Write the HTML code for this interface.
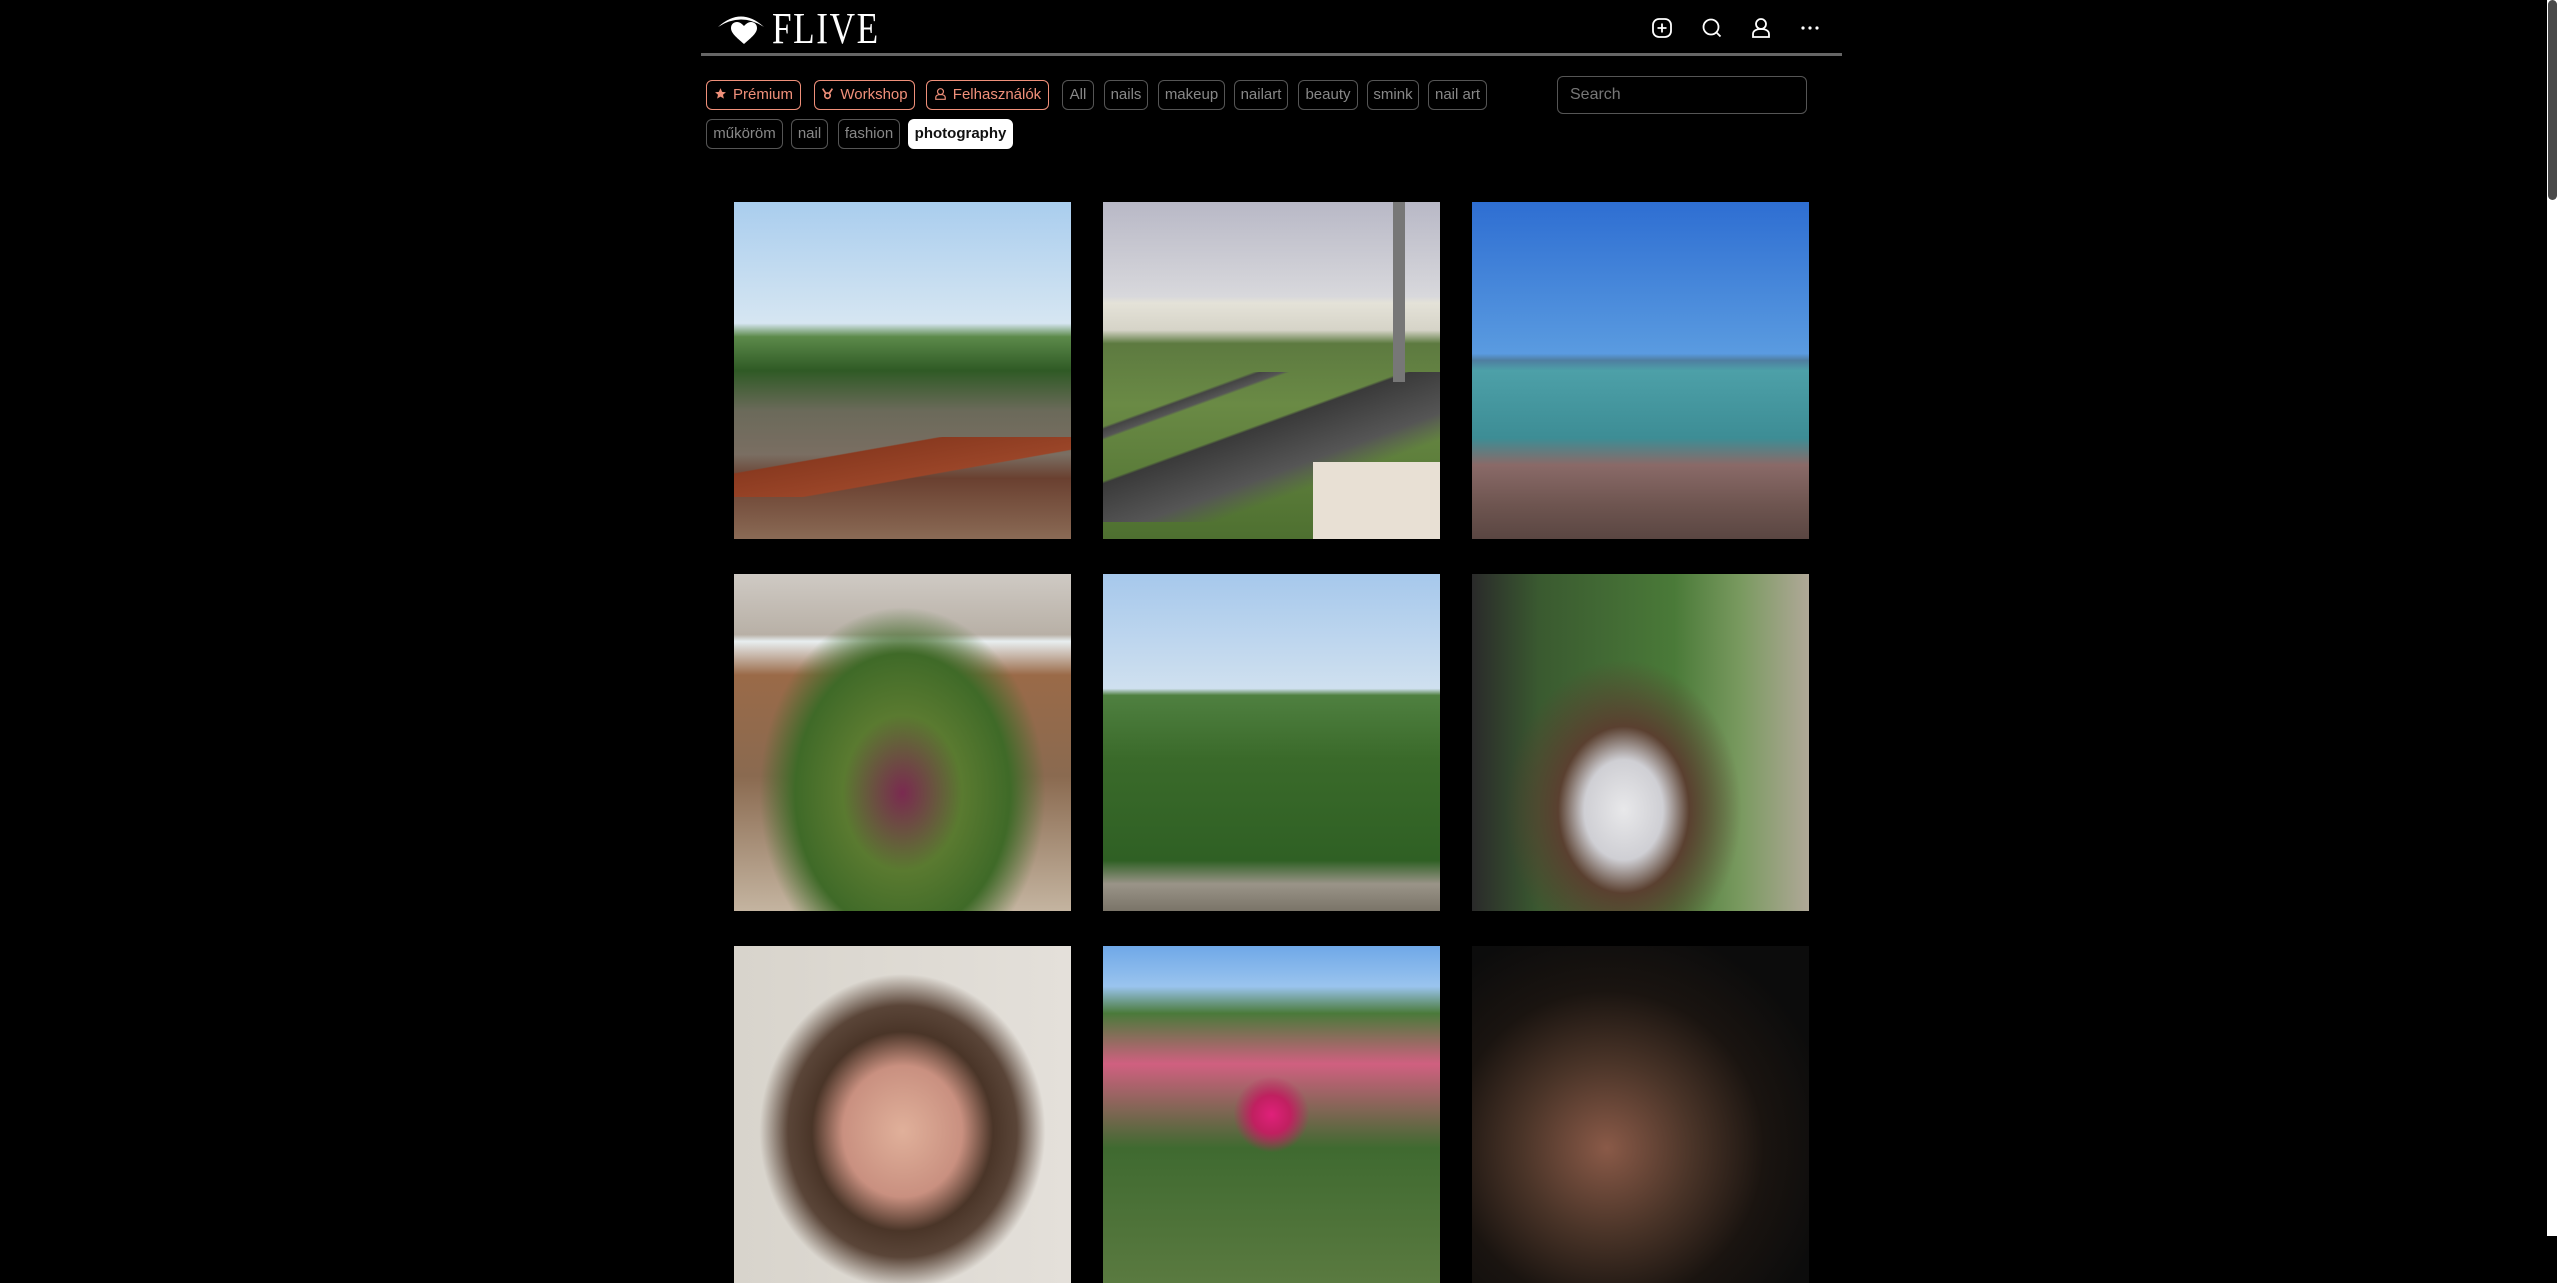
<!DOCTYPE html>
<html><head><meta charset="utf-8"><style>
html,body{margin:0;padding:0;background:#000;width:2557px;height:1236px;overflow:hidden;font-family:"Liberation Sans",sans-serif}
.abs{position:absolute}
.line{left:701px;top:53px;width:1141px;height:3px;background:#666}
.tag{position:absolute;height:28px;border:1px solid #555;border-radius:6px;color:#888;font-size:15px;line-height:28px;text-align:center;box-sizing:content-box}
.o{border-color:#f0907a;color:#f0907a}
.sel{background:#fff;color:#111;font-weight:bold;border-color:#fff}
.ph{position:absolute;width:337px;height:337px;overflow:hidden}
.scroll{left:2547px;top:0;width:10px;height:1236px;background:#fff}
.thumb{left:2548px;top:0;width:9px;height:200px;background:#4a4a4a;border-radius:5px}
</style></head><body>
<svg class="abs" style="left:716px;top:10px" width="52" height="36" viewBox="0 0 52 36">
<path d="M2 17 Q25 -4 48 17 Q25 2 2 17Z" fill="#fff"/>
<path d="M28 34 C20 27 15 23 15 18 C15 14 18 12 21 12 C24 12 26 14 28 16 C30 14 32 12 35 12 C38 12 41 14 41 18 C41 23 36 27 28 34Z" fill="#fff"/>
</svg>
<div class="abs" style="left:772px;top:3px;font-family:'Liberation Serif',serif;font-size:44px;color:#fff;transform:scaleX(0.8);transform-origin:left;letter-spacing:2px;font-weight:normal">FLIVE</div>
<svg class="abs" style="left:1651px;top:17px" width="22" height="22" viewBox="0 0 22 22" fill="none" stroke="#fff" stroke-width="1.8"><rect x="2" y="2" width="18" height="18" rx="6"/><path d="M11 6.5v9M6.5 11h9"/></svg>
<svg class="abs" style="left:1701px;top:17px" width="22" height="22" viewBox="0 0 22 22" fill="none" stroke="#fff" stroke-width="1.8"><circle cx="10" cy="10" r="7.5"/><path d="M15.5 15.5l4 4"/></svg>
<svg class="abs" style="left:1750px;top:17px" width="22" height="22" viewBox="0 0 22 22" fill="none" stroke="#fff" stroke-width="1.8"><circle cx="11" cy="7" r="5"/><path d="M3 20v-3c0-3 3-5 8-5s8 2 8 5v3z"/></svg>
<svg class="abs" style="left:1800px;top:24px" width="20" height="8" viewBox="0 0 20 8" fill="#fff"><circle cx="3" cy="4" r="1.6"/><circle cx="10" cy="4" r="1.6"/><circle cx="17" cy="4" r="1.6"/></svg>
<div class="abs line"></div>
<div class="tag o" style="left:706px;top:80px;width:93px"><svg width="13" height="13" viewBox="0 0 24 24" style="vertical-align:-1px;margin-right:6px"><path d="M12 2l3 7 7 .6-5.4 4.7 1.7 7.2L12 17.8 5.7 21.5l1.7-7.2L2 9.6 9 9z" fill="#f0907a"/></svg>Prémium</div>
<div class="tag o" style="left:814px;top:80px;width:99px"><svg width="13" height="13" viewBox="0 0 24 24" style="vertical-align:-1px;margin-right:6px" fill="none" stroke="#f0907a" stroke-width="3"><path d="M3 3l6 9M21 3l-6 9"/><circle cx="12" cy="16" r="5"/></svg>Workshop</div>
<div class="tag o" style="left:926px;top:80px;width:121px"><svg width="13" height="14" viewBox="0 0 22 22" style="vertical-align:-2px;margin-right:6px" fill="none" stroke="#f0907a" stroke-width="2"><circle cx="11" cy="7" r="5"/><path d="M3 20v-3c0-3 3-5 8-5s8 2 8 5v3z"/></svg>Felhasználók</div>
<div class="tag" style="left:1062px;top:80px;width:30px">All</div>
<div class="tag" style="left:1104px;top:80px;width:42px">nails</div>
<div class="tag" style="left:1158px;top:80px;width:65px">makeup</div>
<div class="tag" style="left:1234px;top:80px;width:52px">nailart</div>
<div class="tag" style="left:1298px;top:80px;width:58px">beauty</div>
<div class="tag" style="left:1367px;top:80px;width:50px">smink</div>
<div class="tag" style="left:1428px;top:80px;width:57px">nail art</div>
<div class="tag" style="left:706px;top:119px;width:75px">műköröm</div>
<div class="tag" style="left:791px;top:119px;width:35px">nail</div>
<div class="tag" style="left:838px;top:119px;width:60px">fashion</div>
<div class="tag sel" style="left:908px;top:119px;width:103px">photography</div>
<div class="abs" style="left:1557px;top:76px;border:1px solid #555;border-radius:6px;color:#777;font-size:16px;line-height:36px;padding-left:12px;box-sizing:border-box;width:250px;height:38px">Search</div>
<div class="ph" style="left:734px;top:202px;background:linear-gradient(#a9cdee 0%,#d6e6f2 36%,#5c8a4a 40%,#2f5a25 50%,#6b6a5a 62%,#7a6e62 75%,#6a4030 82%,#8a6a55 100%)"><div class="abs" style="left:0;top:235px;width:337px;height:60px;background:linear-gradient(170deg,transparent 30%,#8a3a20 31%,#9a4528 60%,transparent 61%)"></div></div>
<div class="ph" style="left:1103px;top:202px;background:linear-gradient(#b8b8c6 0%,#d8d8dc 28%,#e4e2d8 30%,#d6d4c8 38%,#5d7a40 42%,#6a8a45 60%,#4e7030 100%)"><div class="abs" style="left:0;top:170px;width:337px;height:150px;background:linear-gradient(160deg,transparent 20%,#444 21%,#555 24%,transparent 25%,transparent 40%,#3a3a3a 41%,#555 60%,transparent 70%)"></div><div class="abs" style="left:210px;top:260px;width:127px;height:77px;background:#e8e0d4"></div><div class="abs" style="left:290px;top:0;width:12px;height:180px;background:#777"></div></div>
<div class="ph" style="left:1472px;top:202px;background:linear-gradient(#2e6ed2 0%,#5a9be0 45%,#4f7ea0 47%,#4da0a8 50%,#3d8d95 70%,#8a6a68 78%,#6e5550 90%,#5a4642 100%)"></div>
<div class="ph" style="left:734px;top:574px;background:radial-gradient(ellipse at 50% 65%,#7a2a50 0%,#5a7a30 25%,#3f6a28 45%,transparent 60%),linear-gradient(#cfcac4 0%,#b8b0a6 18%,#e8eef0 20%,#9a6a48 30%,#8a6a50 60%,#c4b4a0 100%)"></div>
<div class="ph" style="left:1103px;top:574px;background:linear-gradient(#a6c8ec 0%,#cfe0ef 34%,#4f8040 36%,#3a6a2a 55%,#2f6024 85%,#9a9488 92%,#7a7468 100%)"></div>
<div class="ph" style="left:1472px;top:574px;background:radial-gradient(ellipse at 45% 70%,#e8e8ea 0%,#cfcfd4 15%,#5a4030 25%,transparent 45%),linear-gradient(90deg,#2a2a2a 0%,#3a5a30 20%,#4a7a38 60%,#7a9a60 80%,#b0a898 100%)"></div>
<div class="ph" style="left:734px;top:946px;background:radial-gradient(ellipse at 50% 55%,#e0b09a 0%,#c99080 25%,#4a3528 38%,#5a4538 48%,transparent 60%),linear-gradient(90deg,#d8d4cc,#e4e0da)"></div>
<div class="ph" style="left:1103px;top:946px;background:radial-gradient(ellipse at 50% 50%,#e0207a 0%,#c02060 8%,transparent 16%),linear-gradient(#6fa8e8 0%,#9ac4ee 12%,#4a7a3a 20%,#d06080 35%,#3f6a30 60%,#5a7a40 100%)"></div>
<div class="ph" style="left:1472px;top:946px;background:radial-gradient(ellipse at 40% 60%,#8a5a48 0%,#4a3428 30%,#1a1410 55%,#0c0c0c 80%)"></div>
<div class="abs scroll"></div><div class="abs thumb"></div>
</body></html>
